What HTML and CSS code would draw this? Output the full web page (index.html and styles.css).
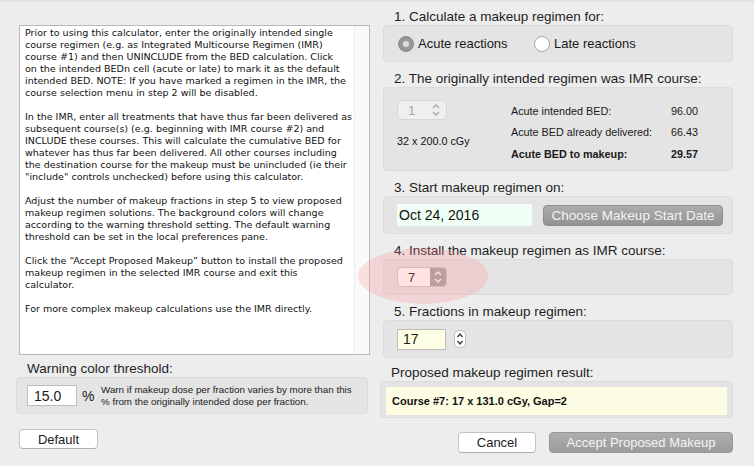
FILE: index.html
```html
<!DOCTYPE html>
<html>
<head>
<meta charset="utf-8">
<link rel="stylesheet" href="styles.css">
</head>
<body>
<div class="window">
  <div class="left">
    <div class="notes">
      <div class="notes-text">
        <p>Prior to using this calculator, enter the originally intended single<br>course regimen (e.g. as Integrated Multicourse Regimen (IMR)<br>course #1) and then UNINCLUDE from the BED calculation. Click<br>on the intended BEDn cell (acute or late) to mark it as the default<br>intended BED. NOTE: If you have marked a regimen in the IMR, the<br>course selection menu in step 2 will be disabled.</p>
        <p>In the IMR, enter all treatments that have thus far been delivered as<br>subsequent course(s) (e.g. beginning with IMR course #2) and<br>INCLUDE these courses. This will calculate the cumulative BED for<br>whatever has thus far been delivered. All other courses including<br>the destination course for the makeup must be unincluded (ie their<br>"include" controls unchecked) before using this calculator.</p>
        <p>Adjust the number of makeup fractions in step 5 to view proposed<br>makeup regimen solutions. The background colors will change<br>according to the warning threshold setting. The default warning<br>threshold can be set in the local preferences pane.</p>
        <p>Click the “Accept Proposed Makeup” button to install the proposed<br>makeup regimen in the selected IMR course and exit this<br>calculator.</p>
        <p>For more complex makeup calculations use the IMR directly.</p>
      </div>
      <div class="gutter"></div>
    </div>
    <div class="label warn-label">Warning color threshold:</div>
    <div class="group warn">
      <div class="field pct-field">15.0</div>
      <span class="pct-sign">%</span>
      <div class="warn-text">Warn if makeup dose per fraction varies by more than this<br>% from the originally intended dose per fraction.</div>
    </div>
    <div class="btn btn-white btn-default">Default</div>
  </div>

  <div class="right">
    <div class="label head">1. Calculate a makeup regimen for:</div>
    <div class="group box1">
      <div class="radio-item acute">
        <span class="radio radio-on"><span class="dot"></span></span>
        <span>Acute reactions</span>
      </div>
      <div class="radio-item">
        <span class="radio"></span>
        <span>Late reactions</span>
      </div>
    </div>

    <div class="label head">2. The originally intended regimen was IMR course:</div>
    <div class="group box2">
      <div class="course-col">
        <div class="stepper stepper-disabled">
          <span class="stepper-val">1</span>
          <svg class="chev" width="8" height="14" viewBox="0 0 8 14"><path d="M1 5 L4 2 L7 5 M1 9 L4 12 L7 9" fill="none" stroke="#a9a9a9" stroke-width="1.3"/></svg>
        </div>
        <div class="regimen">32 x 200.0 cGy</div>
      </div>
      <div class="bed-table">
        <div class="bed-row"><span class="bed-name">Acute intended BED:</span><span>96.00</span></div>
        <div class="bed-row"><span class="bed-name">Acute BED already delivered:</span><span>66.43</span></div>
        <div class="bed-row bold"><span class="bed-name">Acute BED to makeup:</span><span>29.57</span></div>
      </div>
    </div>

    <div class="label head">3. Start makeup regimen on:</div>
    <div class="group box3">
      <div class="date-field">Oct 24, 2016</div>
      <div class="btn btn-gray btn-date">Choose Makeup Start Date</div>
    </div>

    <div class="label head">4. Install the makeup regimen as IMR course:</div>
    <div class="group box4">
      <div class="popup">
        <span class="popup-val">7</span>
        <span class="popup-arrows">
          <svg width="8" height="14" viewBox="0 0 8 14"><path d="M1 5 L4 2 L7 5 M1 9 L4 12 L7 9" fill="none" stroke="#ffffff" stroke-width="1.3"/></svg>
        </span>
      </div>
    </div>

    <div class="label head">5. Fractions in makeup regimen:</div>
    <div class="group box5">
      <div class="field frac-field">17</div>
      <div class="mini-stepper">
        <svg width="8" height="16" viewBox="0 0 8 16"><path d="M1.5 6 L4 3 L6.5 6 M1.5 10 L4 13 L6.5 10" fill="none" stroke="#333" stroke-width="1.2"/></svg>
      </div>
    </div>

    <div class="label head result-head">Proposed makeup regimen result:</div>
    <div class="group result">
      <div class="result-inner">Course #7: 17 x 131.0 cGy, Gap=2</div>
    </div>

    <div class="actions">
      <div class="btn btn-white btn-cancel">Cancel</div>
      <div class="btn btn-gray btn-accept">Accept Proposed Makeup</div>
    </div>
  </div>

  <div class="highlight"></div>
</div>
</body>
</html>
```

FILE: styles.css
```css
* { box-sizing: border-box; }
html, body {
  margin: 0;
  padding: 0;
  width: 754px;
  height: 466px;
  overflow: hidden;
  background: #ededed;
  font-family: "Liberation Sans", Arial, sans-serif;
  color: #1a1a1a;
}
.window {
  position: relative;
  display: flex;
  width: 754px;
  height: 466px;
  border-top: 2px solid #e2e2e2;
}
.left {
  width: 380px;
  padding: 23px 0 0 16px;
  display: flex;
  flex-direction: column;
  align-items: flex-start;
}
.notes {
  margin-left: 3px;
  width: 351px;
  height: 330px;
  background: #fff;
  border: 1px solid #b8b8b8;
  display: flex;
}
.notes-text {
  flex: 1;
  padding: 1px 0 0 5px;
  font-family: "DejaVu Sans", Verdana, sans-serif;
  font-size: 9.55px;
  line-height: 12px;
  color: #111;
  white-space: nowrap;
  overflow: hidden;
}
.notes-text p { margin: 0 0 12px; }
.gutter {
  width: 15px;
  background: #fafafa;
  border-left: 1px solid #ececec;
}
.label {
  font-size: 13.5px;
  line-height: 16px;
  color: #1e1e1e;
}
.warn-label {
  margin: 6px 0 0 11px;
}
.group {
  background: #e4e4e4;
  border: 1px solid #dcdcdc;
  border-radius: 4px;
}
.warn {
  width: 352px;
  height: 37px;
  display: flex;
  align-items: center;
  padding-left: 10px;
}
.field {
  background: #fff;
  border: 1px solid #bcbcbc;
  font-size: 14px;
  display: flex;
  align-items: center;
  padding-left: 4px;
}
.pct-field {
  width: 50px;
  height: 21px;
  padding-left: 6px;
}
.pct-sign {
  font-size: 14px;
  margin-left: 5px;
  width: 19px;
}
.warn-text {
  font-size: 9.8px;
  line-height: 12px;
  color: #222;
}
.btn {
  display: flex;
  align-items: center;
  justify-content: center;
  font-size: 13px;
  border-radius: 4px;
}
.btn-white {
  background: #fff;
  border: 1px solid #c4c4c4;
  border-bottom-color: #aeaeae;
  color: #222;
}
.btn-gray {
  background: linear-gradient(#acacac, #939393);
  border: 1px solid #8d8d8d;
  color: #f4f4f4;
}
.btn-default {
  margin: 15px 0 0 3px;
  width: 79px;
  height: 20px;
}

/* right column */
.right {
  width: 353px;
  padding-top: 7px;
  display: flex;
  flex-direction: column;
  align-items: flex-start;
}
.head {
  margin-left: 14px;
  margin-top: 9px;
  height: 16px;
}
.right > .head:first-child { margin-top: 0; }
.right > .group { margin-left: 3px; width: 350px; }
.box1 {
  height: 37px;
  display: flex;
  align-items: center;
  padding-left: 14px;
  font-size: 13px;
}
.radio-item {
  display: flex;
  align-items: center;
  gap: 4px;
}
.radio-item.acute { width: 136px; }
.radio {
  width: 16px;
  height: 16px;
  border-radius: 50%;
  background: #fff;
  border: 1px solid #a6a6a6;
  display: flex;
  align-items: center;
  justify-content: center;
}
.radio-on {
  background: radial-gradient(#a3a3a3, #8c8c8c);
  border-color: #8a8a8a;
}
.dot {
  width: 6px;
  height: 6px;
  border-radius: 50%;
  background: #dedede;
}
.box2 {
  height: 84px;
  display: flex;
  padding: 12px 0 0 13px;
  font-size: 10.8px;
}
.course-col { width: 114px; }
.stepper {
  width: 50px;
  height: 20px;
  border-radius: 4px;
  display: flex;
  align-items: center;
  justify-content: space-between;
  padding: 0 6px 0 10px;
}
.stepper-disabled {
  background: #efefef;
  border: 1px solid #d6d6d6;
  color: #a8a8a8;
  font-size: 13px;
}
.regimen {
  margin-top: 15px;
  color: #111;
}
.bed-row {
  display: flex;
  height: 21.5px;
  align-items: center;
  color: #1a1a1a;
}
.bed-name { width: 160px; }
.bold { font-weight: bold; }
.box3 {
  height: 38px;
  display: flex;
  align-items: center;
  padding-left: 13px;
}
.date-field {
  width: 135px;
  height: 22px;
  background: #effff5;
  font-size: 14px;
  display: flex;
  align-items: center;
  padding-left: 2px;
  color: #111;
}
.btn-date {
  margin-left: 11px;
  width: 180px;
  height: 21px;
  font-size: 13.5px;
}
.box4 {
  height: 36px;
  display: flex;
  align-items: center;
  padding-left: 13px;
}
.popup {
  width: 50px;
  height: 20px;
  display: flex;
  border: 1px solid #c8c8c8;
  border-radius: 4px;
  overflow: hidden;
  background: #fff;
}
.popup-val {
  flex: 1;
  font-size: 13px;
  display: flex;
  align-items: center;
  padding-left: 10px;
}
.popup-arrows {
  width: 16px;
  background: #a4a4a4;
  display: flex;
  align-items: center;
  justify-content: center;
}
.box5 {
  height: 38px;
  display: flex;
  align-items: center;
  padding-left: 13px;
}
.frac-field {
  width: 49px;
  height: 21px;
  background: #fefee4;
  padding-left: 5px;
}
.mini-stepper {
  margin-left: 8px;
  width: 12px;
  height: 18px;
  background: #fff;
  border: 1px solid #bdbdbd;
  border-radius: 5px;
  display: flex;
  align-items: center;
  justify-content: center;
}
.result-head {
  margin-left: 11px;
  margin-top: 7px;
}
.right > .result {
  margin-left: 0;
  width: 353px;
  height: 37px;
  padding: 5px 5px 2px 5px;
}
.result-inner {
  height: 100%;
  background: #fdfde4;
  font-size: 11px;
  font-weight: bold;
  display: flex;
  align-items: center;
  padding-left: 6px;
  color: #111;
}
.actions {
  align-self: flex-end;
  display: flex;
  gap: 13px;
  margin-top: 14px;
}
.btn-cancel { width: 78px; height: 21px; }
.btn-accept { width: 184px; height: 21px; background: linear-gradient(#adadad, #9c9c9c); border-color: #979797; }

.highlight {
  position: absolute;
  left: 358px;
  top: 246px;
  width: 130px;
  height: 56px;
  border-radius: 50%;
  background: rgba(255, 140, 145, 0.25);
  pointer-events: none;
}
```
